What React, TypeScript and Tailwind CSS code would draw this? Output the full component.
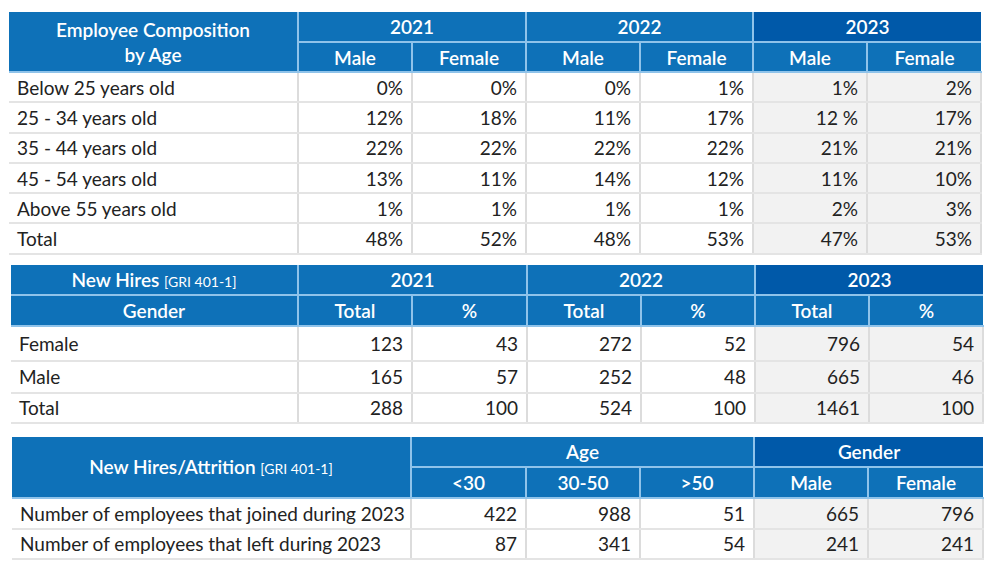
import React from "react";

const FONT = { fontFamily: "Lato, 'Noto Sans', sans-serif" };

const hb = "border-2 border-[#8fc3ea] text-white font-semibold text-center text-[19px]";
const blue = "bg-[#0e71b8]";
const dark = "bg-[#0059a9]";
const bodyLabel = "text-left pl-[8px] text-[19px] text-[#222] font-normal border-b-2 border-[#e4e4e4] border-r-2 border-r-[#dcdcdc] leading-none";
const bodyNum = "text-right pr-[8px] text-[19px] text-[#222] border-b-2 border-[#e4e4e4] border-r-2 border-r-[#dcdcdc] leading-none";

function Num({ v, gray, last }: { v: string; gray?: boolean; last?: boolean }) {
  return (
    <td className={`${bodyNum} ${gray ? "bg-[#f2f2f2]" : ""} ${last ? "border-r-0" : ""}`}>{v}</td>
  );
}

const ageRows: [string, string[]][] = [
  ["Below 25 years old", ["0%", "0%", "0%", "1%", "1%", "2%"]],
  ["25 - 34 years old", ["12%", "18%", "11%", "17%", "12 %", "17%"]],
  ["35 - 44 years old", ["22%", "22%", "22%", "22%", "21%", "21%"]],
  ["45 - 54 years old", ["13%", "11%", "14%", "12%", "11%", "10%"]],
  ["Above 55 years old", ["1%", "1%", "1%", "1%", "2%", "3%"]],
  ["Total", ["48%", "52%", "48%", "53%", "47%", "53%"]],
];

const hireRows: [string, string[], string][] = [
  ["Female", ["123", "43", "272", "52", "796", "54"], "h-[35px]"],
  ["Male", ["165", "57", "252", "48", "665", "46"], "h-[32px]"],
  ["Total", ["288", "100", "524", "100", "1461", "100"], "h-[30px]"],
];

const attrRows: [string, string[], string][] = [
  ["Number of employees that joined during 2023", ["422", "988", "51", "665", "796"], "h-[31px]"],
  ["Number of employees that left during 2023", ["87", "341", "54", "241", "241"], "h-[30px]"],
];

export default function App() {
  return (
    <div className="w-[990px] h-[570px] bg-white overflow-hidden" style={FONT}>
      {/* Table 1 */}
      <div className="pt-[12px] pl-[9px]">
        <table className="table-fixed border-collapse w-[972px]">
          <colgroup>
            <col className="w-[289px]" />
            <col className="w-[114px]" />
            <col className="w-[114px]" />
            <col className="w-[114px]" />
            <col className="w-[113px]" />
            <col className="w-[114px]" />
            <col className="w-[114px]" />
          </colgroup>
          <thead>
            <tr className="h-[30px]">
              <th rowSpan={2} className={`${hb} ${blue} border-l-0 border-t-0 leading-[25px]`}>
                Employee Composition
                <br />
                by Age
              </th>
              <th colSpan={2} className={`${hb} ${blue} border-t-0 leading-none`}>2021</th>
              <th colSpan={2} className={`${hb} ${blue} border-t-0 leading-none`}>2022</th>
              <th colSpan={2} className={`${hb} ${dark} border-t-0 border-r-0 leading-none`}>2023</th>
            </tr>
            <tr className="h-[30px]">
              <th className={`${hb} ${blue} leading-none`}>Male</th>
              <th className={`${hb} ${blue} leading-none`}>Female</th>
              <th className={`${hb} ${blue} leading-none`}>Male</th>
              <th className={`${hb} ${blue} leading-none`}>Female</th>
              <th className={`${hb} ${blue} leading-none`}>Male</th>
              <th className={`${hb} ${blue} border-r-0 leading-none`}>Female</th>
            </tr>
          </thead>
          <tbody>
            {ageRows.map(([label, vals]) => (
              <tr key={label} className="h-[30.3px]">
                <td className={bodyLabel}>{label}</td>
                {vals.map((v, i) => (
                  <Num key={i} v={v} gray={i >= 4} last={i === 5} />
                ))}
              </tr>
            ))}
          </tbody>
        </table>
      </div>

      {/* Table 2 */}
      <div className="pt-[10px] pl-[11px]">
        <table className="table-fixed border-collapse w-[972px]">
          <colgroup>
            <col className="w-[287px]" />
            <col className="w-[114px]" />
            <col className="w-[115px]" />
            <col className="w-[114px]" />
            <col className="w-[114px]" />
            <col className="w-[114px]" />
            <col className="w-[114px]" />
          </colgroup>
          <thead>
            <tr className="h-[30px]">
              <th className={`${hb} ${blue} border-l-0 border-t-0 leading-none`}>
                New Hires <span className="text-[14px] font-normal">[GRI 401-1]</span>
              </th>
              <th colSpan={2} className={`${hb} ${blue} border-t-0 leading-none`}>2021</th>
              <th colSpan={2} className={`${hb} ${blue} border-t-0 leading-none`}>2022</th>
              <th colSpan={2} className={`${hb} ${dark} border-t-0 border-r-0 leading-none`}>2023</th>
            </tr>
            <tr className="h-[31px]">
              <th className={`${hb} ${blue} border-l-0 leading-none`}>Gender</th>
              <th className={`${hb} ${blue} leading-none`}>Total</th>
              <th className={`${hb} ${blue} leading-none`}>%</th>
              <th className={`${hb} ${blue} leading-none`}>Total</th>
              <th className={`${hb} ${blue} leading-none`}>%</th>
              <th className={`${hb} ${blue} leading-none`}>Total</th>
              <th className={`${hb} ${blue} border-r-0 leading-none`}>%</th>
            </tr>
          </thead>
          <tbody>
            {hireRows.map(([label, vals, h]) => (
              <tr key={label} className={h}>
                <td className={bodyLabel}>{label}</td>
                {vals.map((v, i) => (
                  <Num key={i} v={v} gray={i >= 4} last={i === 5} />
                ))}
              </tr>
            ))}
          </tbody>
        </table>
      </div>

      {/* Table 3 */}
      <div className="pt-[13px] pl-[12px]">
        <table className="table-fixed border-collapse w-[971px]">
          <colgroup>
            <col className="w-[399px]" />
            <col className="w-[115px]" />
            <col className="w-[114px]" />
            <col className="w-[114px]" />
            <col className="w-[114px]" />
            <col className="w-[115px]" />
          </colgroup>
          <thead>
            <tr className="h-[30px]">
              <th rowSpan={2} className={`${hb} ${blue} border-l-0 border-t-0 leading-none`}>
                New Hires/Attrition <span className="text-[14px] font-normal">[GRI 401-1]</span>
              </th>
              <th colSpan={3} className={`${hb} ${blue} border-t-0 leading-none`}>Age</th>
              <th colSpan={2} className={`${hb} ${dark} border-t-0 border-r-0 leading-none`}>Gender</th>
            </tr>
            <tr className="h-[31px]">
              <th className={`${hb} ${blue} leading-none`}>&lt;30</th>
              <th className={`${hb} ${blue} leading-none`}>30-50</th>
              <th className={`${hb} ${blue} leading-none`}>&gt;50</th>
              <th className={`${hb} ${blue} leading-none`}>Male</th>
              <th className={`${hb} ${blue} border-r-0 leading-none`}>Female</th>
            </tr>
          </thead>
          <tbody>
            {attrRows.map(([label, vals, h]) => (
              <tr key={label} className={h}>
                <td className={bodyLabel}>{label}</td>
                {vals.map((v, i) => (
                  <Num key={i} v={v} gray={i >= 3} last={i === 4} />
                ))}
              </tr>
            ))}
          </tbody>
        </table>
      </div>
    </div>
  );
}
